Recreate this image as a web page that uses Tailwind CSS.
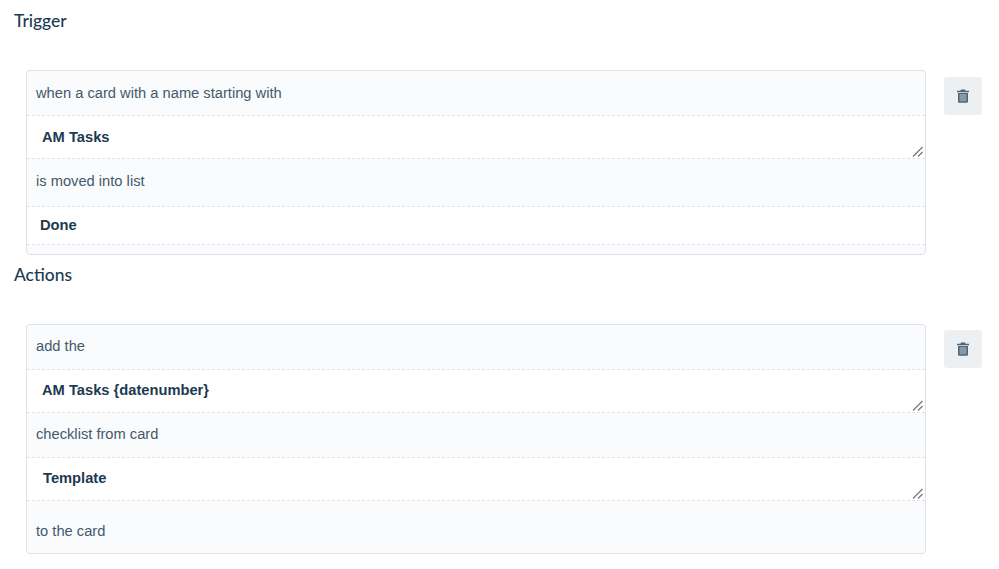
<!doctype html>
<html lang="en">
    <head>
        <meta charset="UTF-8">
        <meta name="viewport" content="width=device-width, initial-scale=1.0">
        <script src="https://cdn.jsdelivr.net/npm/@tailwindcss/browser@4"></script>
        <title>Rule editor</title>
    </head>

    <body class="bg-white font-['Liberation_Sans',sans-serif] overflow-hidden">
        <div class="h-[569px] w-[999px] pl-[14px]">

            <h2 class="h-[70px] pt-[10px] font-['Lato',sans-serif] text-[17.4px] leading-[22px] font-medium text-[#1c3a50]">Trigger</h2>
            <div class="flex items-start pl-[12px]">
                <div class="w-[900px] h-[185px] flex flex-col rounded-[4px] border border-[#dfe3e8] bg-[#fafbfd] overflow-hidden">
                    <div class="h-[44px] pl-[9px] flex items-center text-[14.7px] text-[#44596b]">when a card with a name starting with</div>
                    <div class="relative h-[44px] shrink-0">
                        <textarea class="block w-full h-[44px] resize-y [&::-webkit-resizer]:bg-transparent bg-white border-y border-dashed border-[#dfe3e8] pl-[15px] pt-[12px] text-[14.7px] leading-[18px] font-bold text-[#1c3a50] outline-none overflow-hidden">AM Tasks</textarea>
                        <svg class="absolute right-[2px] bottom-[2px] pointer-events-none" width="11" height="11" viewBox="0 0 11 11"><path stroke="#777" stroke-width="1.2" fill="none" d="M1 10.500L10.500 1M6 10.500L10.500 6"/></svg>
                    </div>
                    <div class="h-[47px] pl-[9px] pb-[2px] flex items-center text-[14.7px] text-[#44596b]">is moved into list</div>
                    <div class="h-[39px] pl-[13px] flex items-center bg-white border-y border-dashed border-[#dfe3e8] text-[14.7px] font-bold text-[#1c3a50]">Done</div>
                </div>
                <button class="ml-[18px] mt-[7px] w-[38px] h-[38px] flex items-center justify-center rounded-[3px] bg-[#edf0f2]">
                    <svg width="12" height="14" viewBox="0 0 12 14"><path fill="#4d6578" d="M4 0.500h4l.6 1.200H12v1.500H0V1.700h3.400zM1 4h10v8.500a1.200 1.200 0 0 1-1.200 1.200H2.200a1.200 1.200 0 0 1-1.200-1.200z"/><path fill="#8699a6" d="M2.500 5h7v7.300h-7z"/></svg>
                </button>
            </div>

            <h2 class="h-[69px] pt-[9px] font-['Lato',sans-serif] text-[17.4px] leading-[22px] font-medium text-[#1c3a50]">Actions</h2>
            <div class="flex items-start pl-[12px]">
                <div class="w-[900px] h-[230px] flex flex-col rounded-[4px] border border-[#dfe3e8] bg-[#fafbfd] overflow-hidden">
                    <div class="h-[44px] pl-[9px] pb-[1px] flex items-center text-[14.7px] text-[#44596b]">add the</div>
                    <div class="relative h-[44px] shrink-0">
                        <textarea class="block w-full h-[44px] resize-y [&::-webkit-resizer]:bg-transparent bg-white border-y border-dashed border-[#dfe3e8] pl-[15px] pt-[11px] text-[14.7px] leading-[18px] font-bold text-[#1c3a50] outline-none overflow-hidden">AM Tasks {datenumber}</textarea>
                        <svg class="absolute right-[2px] bottom-[2px] pointer-events-none" width="11" height="11" viewBox="0 0 11 11"><path stroke="#777" stroke-width="1.2" fill="none" d="M1 10.500L10.500 1M6 10.500L10.500 6"/></svg>
                    </div>
                    <div class="h-[44px] pl-[9px] pb-[1px] flex items-center text-[14.7px] text-[#44596b]">checklist from card</div>
                    <div class="relative h-[44px] shrink-0">
                        <textarea class="block w-full h-[44px] resize-y [&::-webkit-resizer]:bg-transparent bg-white border-y border-dashed border-[#dfe3e8] pl-[16px] pt-[11px] text-[14.7px] leading-[18px] font-bold text-[#1c3a50] outline-none overflow-hidden">Template</textarea>
                        <svg class="absolute right-[2px] bottom-[2px] pointer-events-none" width="11" height="11" viewBox="0 0 11 11"><path stroke="#777" stroke-width="1.2" fill="none" d="M1 10.500L10.500 1M6 10.500L10.500 6"/></svg>
                    </div>
                    <div class="h-[52px] pl-[9px] pt-[19px] text-[14.7px] leading-[22px] text-[#44596b]">to the card</div>
                </div>
                <button class="ml-[18px] mt-[6px] w-[38px] h-[38px] flex items-center justify-center rounded-[3px] bg-[#edf0f2]">
                    <svg width="12" height="14" viewBox="0 0 12 14"><path fill="#4d6578" d="M4 0.500h4l.6 1.200H12v1.500H0V1.700h3.400zM1 4h10v8.500a1.200 1.200 0 0 1-1.200 1.200H2.200a1.200 1.200 0 0 1-1.200-1.200z"/><path fill="#8699a6" d="M2.500 5h7v7.300h-7z"/></svg>
                </button>
            </div>
        </div>
    </body>
</html>
